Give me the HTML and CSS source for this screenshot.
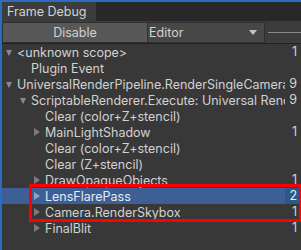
FILE: index.html
```html
<!DOCTYPE html>
<html lang="en">
<head>
    <meta charset="UTF-8">
    <title>Frame Debug</title>
    <link rel="stylesheet" href="styles.css">
</head>
<body>
    <div class="window">
        <div class="tabbar">
            <div class="tab">Frame Debug</div>
        </div>
        <div class="toolbar">
            <button class="btn-disable">Disable</button>
            <div class="dropdown">
                <span>Editor</span>
                <svg class="drop-arrow" width="8" height="5" viewBox="0 0 8 5"><path d="M0 0H8L4 5Z" fill="#c4c4c4"/></svg>
            </div>
            <div class="slider"><span class="slider-line"></span></div>
        </div>

        <div class="tree">
            <div class="row">
                <div class="name lvl0"><span class="arrow open"></span>&lt;unknown scope&gt;</div>
                <div class="count">1</div>
            </div>
            <div class="row">
                <div class="name lvl1"><span class="arrow"></span>Plugin Event</div>
                <div class="count"></div>
            </div>
            <div class="row">
                <div class="name lvl0"><span class="arrow open"></span>UniversalRenderPipeline.RenderSingleCamera: Main Camera</div>
                <div class="count">9</div>
            </div>
            <div class="row">
                <div class="name lvl1"><span class="arrow open"></span>ScriptableRenderer.Execute: Universal Renderer</div>
                <div class="count">9</div>
            </div>
            <div class="row">
                <div class="name lvl2"><span class="arrow"></span>Clear (color+Z+stencil)</div>
                <div class="count"></div>
            </div>
            <div class="row">
                <div class="name lvl2"><span class="arrow closed"></span>MainLightShadow</div>
                <div class="count">1</div>
            </div>
            <div class="row">
                <div class="name lvl2"><span class="arrow"></span>Clear (color+Z+stencil)</div>
                <div class="count"></div>
            </div>
            <div class="row">
                <div class="name lvl2"><span class="arrow"></span>Clear (Z+stencil)</div>
                <div class="count"></div>
            </div>
            <div class="row">
                <div class="name lvl2"><span class="arrow closed"></span>DrawOpaqueObjects</div>
                <div class="count">1</div>
            </div>
            <div class="row selected">
                <div class="name lvl2"><span class="arrow closed"></span>LensFlarePass</div>
                <div class="count">2</div>
            </div>
            <div class="row">
                <div class="name lvl2"><span class="arrow closed"></span>Camera.RenderSkybox</div>
                <div class="count">1</div>
            </div>
            <div class="row">
                <div class="name lvl2"><span class="arrow closed"></span>FinalBlit</div>
                <div class="count">1</div>
            </div>
        </div>

        <!-- annotation box over the two rows -->
        <div class="highlight"></div>
    </div>
</body>
</html>
```

FILE: styles.css
```css
body { margin: 0; padding: 0; background-color: #383838; font-family: Inter, "Noto Sans", sans-serif; font-size: 12.5px; color: #d2d2d2; }
.window { position: relative; width: 301px; height: 250px; overflow: hidden; border-top: 2px solid #2a6cc0; box-sizing: border-box; border-left: 2px solid #2a6cc0; }

/* tab strip */
.tabbar { height: 19px; background-color: #282828; display: flex; margin-left: -2px; }
.tab { width: 96px; background-color: #3c3c3c; padding-left: 7px; box-sizing: border-box; line-height: 20px; color: #d2d2d2; }

/* toolbar */
.toolbar { height: 22px; display: flex; background-color: #3c3c3c; border-bottom: 1px solid #232323; margin-left: -2px; }
.btn-disable {
    width: 146px;
    margin: 1px 0 0 2px;
    background-color: #585858;
    border: 1px solid #303030;
    border-radius: 0;
    color: #d2d2d2;
    font: inherit;
    padding: 0;
}
.dropdown {
    width: 117px;
    margin-top: 1px;
    background-color: #474747;
    border: 1px solid #303030;
    border-left: none;
    display: flex;
    align-items: center;
    justify-content: space-between;
    padding: 0 7px 0 1px;
    box-sizing: border-box;
}
.drop-arrow { display: block; }
.slider { flex: 1; display: flex; align-items: center; padding-left: 3px; }
.slider-line { display: block; width: 100%; height: 1px; background-color: #8a8a8a; }

/* tree view */
.tree { margin-left: -2px; }
.row { height: 16px; display: flex; align-items: center; }
.name { flex: 1; min-width: 0; white-space: nowrap; overflow: hidden; text-overflow: clip; display: flex; align-items: center; }
.lvl0 { padding-left: 5px; }
.lvl1 { padding-left: 19px; }
.lvl2 { padding-left: 33px; }
.count { width: 16px; flex: none; padding-right: 4px; text-align: right; box-sizing: border-box; line-height: 16px; height: 16px; }

.arrow { width: 12px; height: 16px; flex: none; position: relative; }
.arrow.open::before {
    content: "";
    position: absolute;
    left: 1px; top: 6px;
    border-left: 3.5px solid transparent;
    border-right: 3.5px solid transparent;
    border-top: 6px solid #8a8a8a;
}
.arrow.closed::before {
    content: "";
    position: absolute;
    left: 1px; top: 4px;
    border-top: 4px solid transparent;
    border-bottom: 4px solid transparent;
    border-left: 6px solid #7c7c7c;
}

.row.selected { background-color: #3d5f96; color: #e6ecf5; }
.row.selected .count { background-color: #2c5a86; }
.row.selected .arrow.closed::before { border-left-color: #8ea3c3; }

.highlight {
    position: absolute;
    left: 27px;
    top: 182px;
    width: 273px;
    height: 38px;
    border: 3px solid #ff0000;
    box-sizing: border-box;
}
```
